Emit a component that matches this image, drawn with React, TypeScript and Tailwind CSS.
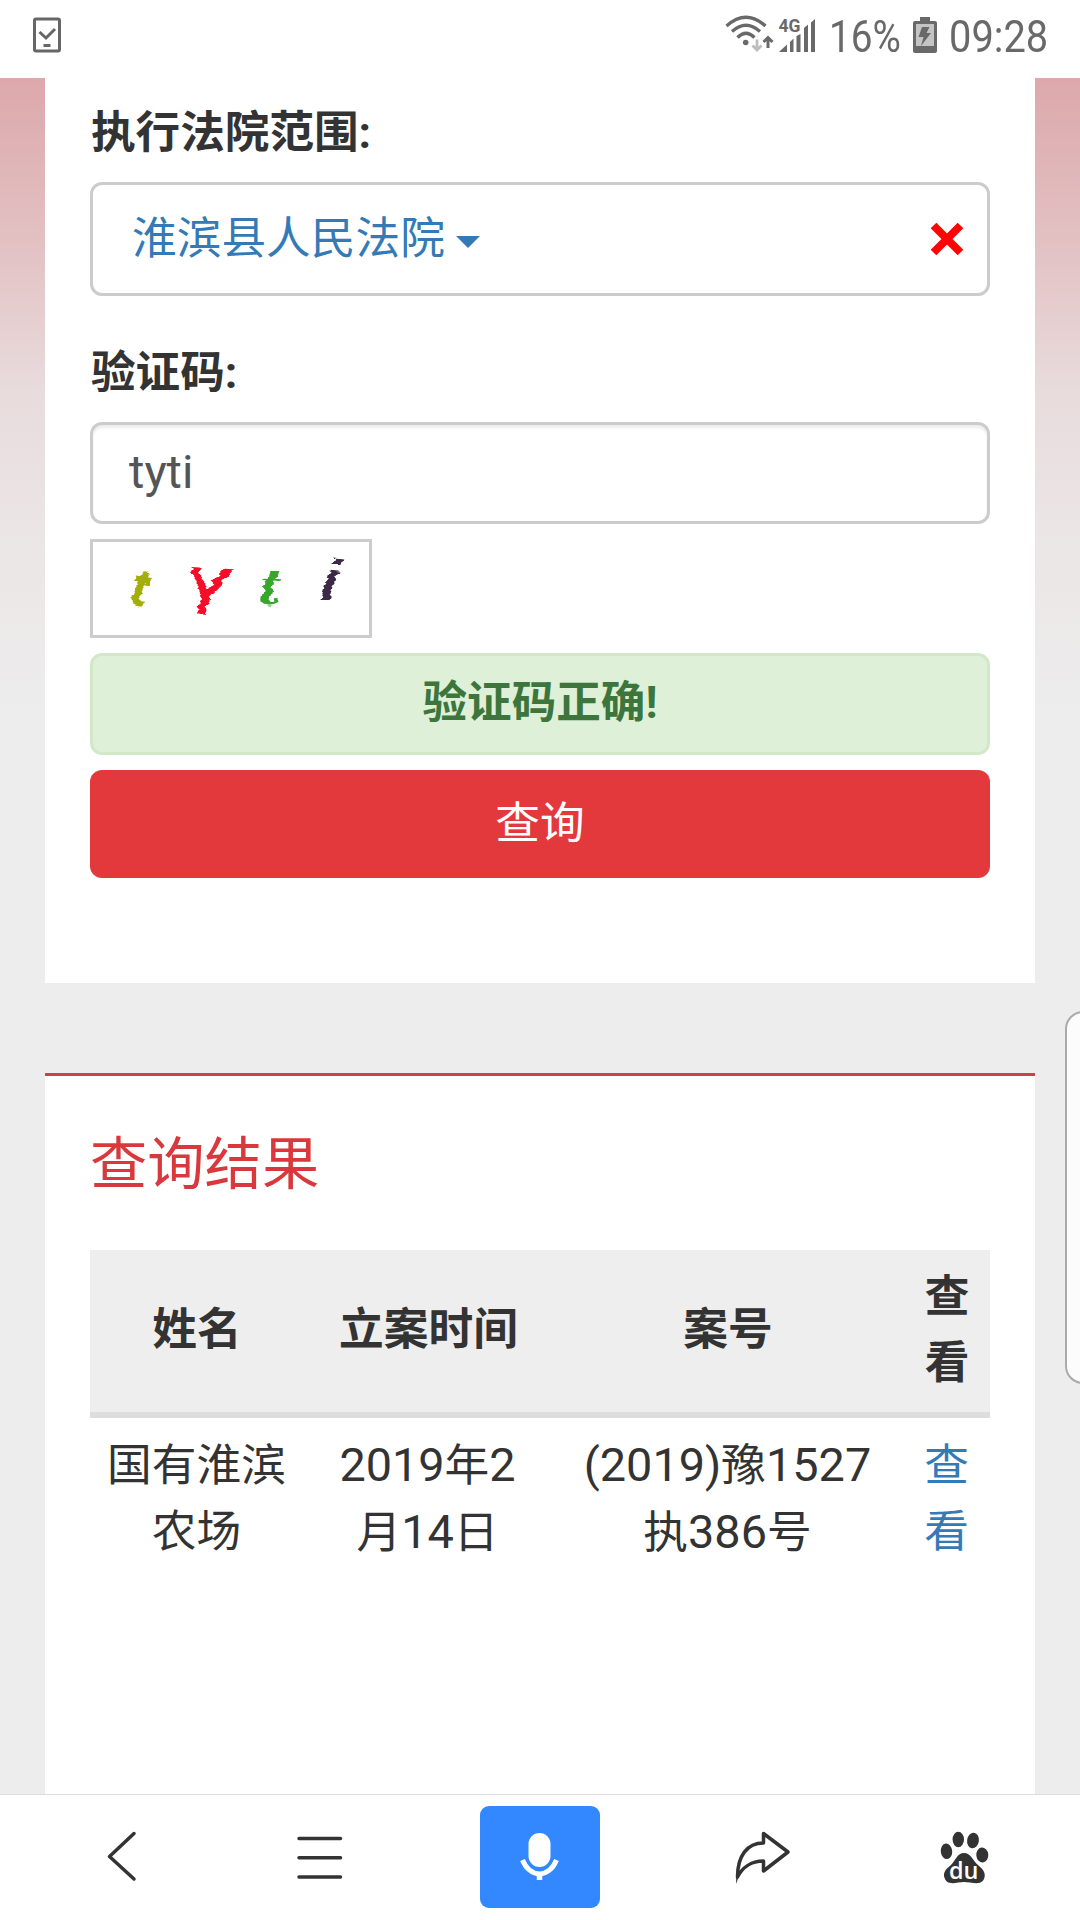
import React, { useState } from 'react';

type CaseRecord = {
  name: string[];
  date: string[];
  caseNo: string[];
};

const records: CaseRecord[] = [
  { name: ['国有淮滨', '农场'], date: ['2019年2', '月14日'], caseNo: ['(2019)豫1527', '执386号'] },
];

// Latin characters are set a little larger than the Chinese ones
function MixedText({ lines }: { lines: string[] }) {
  return (
    <>
      {lines.map((line) => (
        <div key={line} className="whitespace-nowrap">
          {line.split(/([0-9()]+)/).map((part, i) =>
            /[0-9()]/.test(part) ? (
              <span key={i} className="text-[46.8px]">{part}</span>
            ) : (
              <span key={i}>{part}</span>
            )
          )}
        </div>
      ))}
    </>
  );
}

function StatusBar() {
  return (
    <header className="flex h-[78px] shrink-0 items-start bg-white text-[#696969]">
      <svg className="ml-[32px] mt-[16px] h-[38px] w-[30px]" viewBox="32 16 30 38" fill="none" stroke="#666" strokeWidth="3">
        <rect x="34.5" y="19" width="25" height="32" rx="1.5" />
        <path d="M39.5 32 L46 38 L55 29" />
        <path d="M43.5 45.5 H50.5" />
      </svg>
      <svg className="ml-[662px] mt-[14px] h-[40px] w-[50px]" viewBox="724 14 50 40" fill="none" stroke="#696969" strokeWidth="3.3">
        <path d="M726.5 26 Q746 8.5 765.500 26" />
        <path d="M732 31.500 Q746 19 760 31.500" />
        <path d="M737.500 37.500 Q746 29 754.500 37.500" />
        <circle cx="745.700" cy="42.500" r="2.800" fill="#696969" stroke="none" />
        <path d="M757 39.500 V50 M752.500 45.500 L757 50 L761.500 45.500" stroke="#bdbdbd" strokeWidth="2.800" />
        <path d="M768 48 V38 M763.500 42 L768 37.500 L772.500 42" strokeWidth="3" />
      </svg>
      <svg className="ml-[4px] mt-[16px] h-[38px] w-[40px]" viewBox="778 16 40 38" fill="#696969">
        <text x="778.500" y="32.300" fontFamily="Roboto" fontWeight="700" fontSize="17.500" textLength="22" lengthAdjust="spacingAndGlyphs">4G</text>
        <path d="M779 52 L787 44.500 V52 Z" />
        <path d="M790 42 L793.500 38.500 V52 H790 Z" />
        <path d="M796.500 36 L800.500 34 V52 H796.500 Z" />
        <path d="M804 28 L808 24.500 V52 H804 Z" />
        <path d="M811 22.500 L815 19 V52 H811 Z" />
      </svg>
      <span className="ml-[11px] mt-[11px] w-[84px] origin-left scale-x-[0.86] whitespace-nowrap text-[45px] leading-[52px]">16%</span>
      <svg className="mt-[16px] h-[38px] w-[26px]" viewBox="913 16 26 38">
        <path d="M920 17 H930 V21 H935 Q937 21 937 23 V51 Q937 53 935 53 H915 Q913 53 913 51 V23 Q913 21 915 21 H920 Z" fill="#696969" />
        <rect x="916" y="24" width="18" height="22" fill="#c4c4c4" />
        <path d="M922 27 H929.500 L926.500 33 H931 L921 46 L923.500 37 H918.500 Z" fill="#696969" />
      </svg>
      <span className="ml-[10px] mt-[11px] origin-left scale-x-[0.885] whitespace-nowrap text-[45px] leading-[52px]">09:28</span>
    </header>
  );
}

function CaptchaImage() {
  return (
    <svg className="mt-[15px] block h-[99px] w-[282px] border-[3px] border-[#ccc]" viewBox="0 0 276 93">
      <filter id="wobble" x="-20%" y="-20%" width="140%" height="140%">
        <feTurbulence type="fractalNoise" baseFrequency="0.02 0.24" numOctaves="1" seed="4" />
        <feDisplacementMap in="SourceGraphic" scale="9" xChannelSelector="R" yChannelSelector="A" />
        <feGaussianBlur stdDeviation="0.5" />
      </filter>
      <g filter="url(#wobble)" fontFamily="Liberation Sans" fontStyle="italic" fontWeight="700">
        <text x="37" y="64" fontSize="54" fill="#a3ae10" transform="rotate(10 48 50)">t</text>
        <text x="91" y="72" fontSize="64" fontWeight="400" fill="#f5102a" stroke="#f5102a" strokeWidth="2" transform="rotate(3 115 50)">Y</text>
        <text x="166" y="62" fontSize="49" fill="#38a62c" fontFamily="DejaVu Serif" transform="rotate(4 180 50)">t</text>
        <text x="229" y="58" fontSize="58" fill="#3d2b48" transform="rotate(8 236 40)">i</text>
      </g>
    </svg>
  );
}

function QueryForm() {
  const [code, setCode] = useState('tyti');

  return (
    <section className="mx-[45px] h-[905px] bg-white px-[45px] pt-[23px]">
      <label className="block h-[81px] pl-[1px] text-[44.6px] font-bold leading-[64px]">执行法院范围:</label>
      <div className="flex h-[114px] items-center rounded-[12px] border-[3px] border-[#ccc] pl-[39px] pr-[22px]">
        <a className="flex items-center text-[44.7px] leading-[64px] text-[#337ab7]">
          <span>淮滨县人民法院</span>
          <span className="ml-[11px] mt-[5px] border-x-[12px] border-t-[12px] border-x-transparent border-t-[#337ab7]" />
        </a>
        <svg className="ml-auto size-[36px]" viewBox="0 0 36 36" stroke="#fb0505" strokeWidth="8">
          <path d="M4.500 4.500 L31.500 31.500 M31.500 4.500 L4.500 31.500" />
        </svg>
      </div>

      <label className="mt-[45px] block h-[81px] pl-[1px] text-[44.6px] font-bold leading-[64px]">验证码:</label>
      <input
        value={code}
        onChange={(e) => setCode(e.target.value)}
        className="block h-[102px] w-full rounded-[12px] border-[3px] border-[#ccc] px-[36px] pb-[4px] text-[47px] text-[#555] shadow-[inset_0_3px_3px_rgba(0,0,0,0.075)] outline-none"
      />
      <CaptchaImage />
      <div className="mt-[15px] h-[102px] rounded-[12px] border-[3px] border-[#d3e8c9] bg-[#def0d8] pt-[15px] text-center text-[44.6px] font-bold leading-[64px] text-[#3c763d]">
        验证码正确!
      </div>
      <button className="mt-[15px] block h-[108px] w-full rounded-[12px] bg-[#e4393c] text-[44.7px] leading-[64px] text-white">
        查询
      </button>
    </section>
  );
}

function Results() {
  return (
    <section className="mx-[45px] mt-[90px] grow border-t-[3px] border-[#c9434a] bg-white px-[45px]">
      <h2 className="mt-[48px] h-[126px] text-[57.3px] leading-[82px] text-[#d9383c]">查询结果</h2>
      <table className="w-full table-fixed text-center text-[44.7px] leading-[66px]">
        <colgroup>
          <col className="w-[213px]" />
          <col className="w-[250px]" />
          <col className="w-[348px]" />
          <col className="w-[89px]" />
        </colgroup>
        <thead>
          <tr className="h-[165px] border-b-[6px] border-[#ddd] bg-[#eee]">
            <th className="pb-[2px] pl-[1px]">姓名</th>
            <th className="pb-[2px] pl-[1px]">立案时间</th>
            <th className="pb-[2px] pl-[2px]">案号</th>
            <th className="pb-[2px] pl-[3px]">查<br />看</th>
          </tr>
        </thead>
        <tbody>
          {records.map((item, i) => (
            <tr key={i}>
              <td className="pt-[14px]"><MixedText lines={item.name} /></td>
              <td className="pr-[1px] pt-[14px]"><MixedText lines={item.date} /></td>
              <td className="pl-[1px] pt-[14px]"><MixedText lines={item.caseNo} /></td>
              <td className="pl-[2px] pt-[14px] text-[#337ab7]"><a>查<br />看</a></td>
            </tr>
          ))}
        </tbody>
      </table>
    </section>
  );
}

function BottomBar() {
  return (
    <nav className="flex h-[126px] shrink-0 items-start border-t border-[#ddd] bg-white">
      <svg className="ml-[104px] mt-[33px] h-[56px] w-[36px]" viewBox="104 1828 36 56" fill="none" stroke="#333" strokeWidth="3.500" strokeLinecap="round" strokeLinejoin="round">
        <path d="M134 1833.500 L109.500 1856.500 L134 1879" />
      </svg>
      <svg className="ml-[154px] mt-[33px] h-[56px] w-[52px]" viewBox="294 1828 52 56" stroke="#333" strokeWidth="3.500" strokeLinecap="round">
        <path d="M299 1838.500 H340.500 M299 1857.700 H340.500 M299 1877 H340.500" />
      </svg>
      <button className="ml-[134px] mt-[11px] flex h-[102px] w-[120px] items-center justify-center rounded-[9px] bg-[#3388ff]">
        <svg className="h-[50px] w-[42px]" viewBox="519 1832 42 50" fill="none">
          <rect x="528.500" y="1833" width="22" height="34" rx="11" fill="#fff" />
          <path d="M522.500 1860 C530 1878.500 549 1878.500 556.500 1860" stroke="#fff" strokeWidth="5" />
          <path d="M539.500 1872 V1880" stroke="#fff" strokeWidth="5.500" />
        </svg>
      </button>
      <svg className="ml-[132px] mt-[33px] h-[60px] w-[60px]" viewBox="732 1828 60 60" fill="none" stroke="#333" strokeWidth="3.500" strokeLinejoin="round">
        <path d="M763.500 1833.500 L788 1852 L763.500 1871 V1861 C751 1861 742 1868 737.500 1877 C737.500 1856 747 1843 763.500 1843 Z" />
        <path d="M736 1884 L736.500 1871 L742 1871 Q738 1877 736 1884 Z" fill="#333" stroke="none" />
      </svg>
      <svg className="ml-[148px] mt-[33px] h-[60px] w-[50px]" viewBox="940 1828 50 60" fill="#333">
        <ellipse cx="946.500" cy="1851.300" rx="5.700" ry="7.800" transform="rotate(-6 946.500 1851.300)" />
        <ellipse cx="958.300" cy="1839.500" rx="5.700" ry="7.800" />
        <ellipse cx="973" cy="1840.500" rx="5.900" ry="7.800" transform="rotate(8 973 1840.500)" />
        <ellipse cx="982.300" cy="1855" rx="6" ry="7.500" transform="rotate(-6 982.300 1855)" />
        <path d="M964 1853 C971 1853 972 1860 979 1866 C984 1870 986 1874 984 1879 C981 1886 971 1882 964 1882 C957 1882 948 1886 945 1879 C942 1873 946 1869 951 1865 C956 1860 957 1853 964 1853 Z" />
        <text x="949" y="1878.500" fill="#fff" fontFamily="Open Sans" fontWeight="600" fontSize="22.500" textLength="29.500" lengthAdjust="spacingAndGlyphs">du</text>
      </svg>
    </nav>
  );
}

export default function App() {
  return (
    <div className="relative flex h-[1920px] w-[1080px] flex-col overflow-hidden bg-[#ededed] font-[Roboto,'Noto_Sans_CJK_SC',sans-serif] text-[#333]">
      <StatusBar />
      <main className="flex grow flex-col bg-[linear-gradient(#dca8ab_0px,#e3c2c4_170px,#e8dbdc_310px,#ebe5e5_450px,#ededed_640px)]">
        <QueryForm />
        <Results />
      </main>
      <BottomBar />

      {/* Edge panel handle */}
      <div className="absolute left-[1065px] top-[1011px] h-[373px] w-[40px] rounded-[18px] border-2 border-[#aaa] bg-[#fcfcfc]" />
    </div>
  );
}
